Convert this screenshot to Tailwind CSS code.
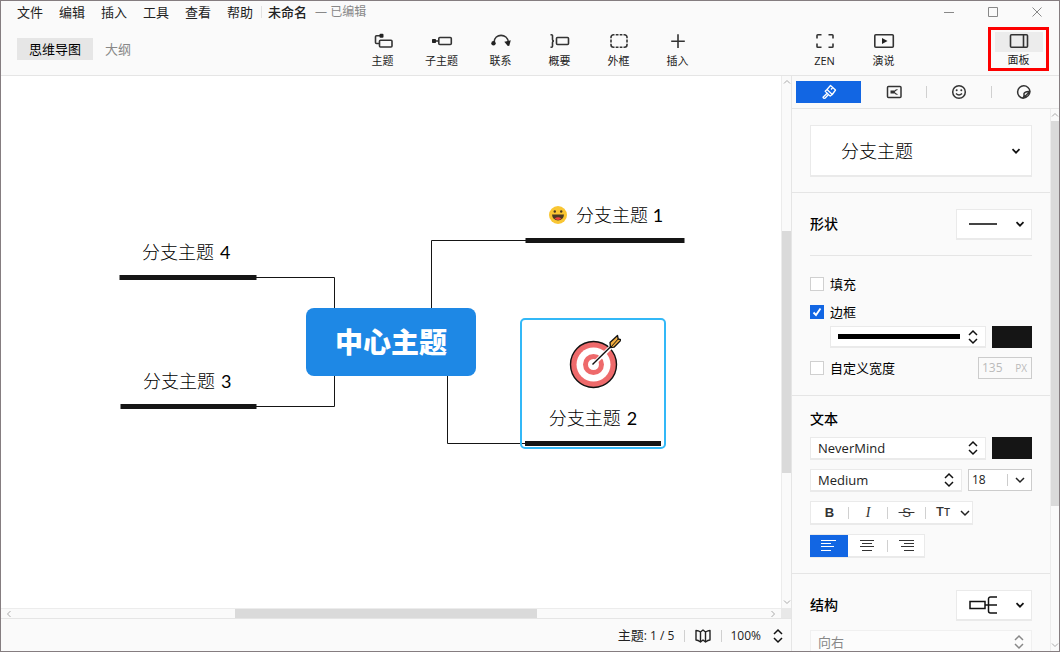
<!DOCTYPE html>
<html lang="zh-CN">
<head>
<meta charset="utf-8">
<meta name="viewport" content="width=device-width, initial-scale=1">
<title>未命名</title>
<script src="https://cdn.jsdelivr.net/npm/@tailwindcss/browser@4"></script>
</head>
<body class="flex h-screen flex-col overflow-hidden border border-[#857d80] bg-[#fafafa] font-['Open_Sans','Noto_Sans_CJK_SC',sans-serif] text-[13px] leading-5 text-[#222]">

<header class="flex h-[75px] shrink-0 flex-col border-b border-[#e5e5e5]">
  <div class="flex h-[22px] items-center justify-between">
    <nav class="flex items-center pl-4" aria-label="主菜单">
      <div class="flex gap-4">
        <button type="button">文件</button>
        <button type="button">编辑</button>
        <button type="button">插入</button>
        <button type="button">工具</button>
        <button type="button">查看</button>
        <button type="button">帮助</button>
      </div>
      <span class="ml-2 h-3 w-px bg-[#e2e2e2]"></span>
      <span class="ml-1.5 font-medium">未命名</span>
      <span class="ml-2 text-xs text-[#888]">— 已编辑</span>
    </nav>
    <div class="flex">
      <button type="button" aria-label="最小化" class="flex w-11 justify-center"><svg class="size-3" viewBox="0 0 12 12" stroke="#888"><path d="M1 6.500h10"/></svg></button>
      <button type="button" aria-label="最大化" class="flex w-11 justify-center"><svg class="size-3" viewBox="0 0 12 12" fill="none" stroke="#888"><path d="M1.500 1.500h9v9h-9z"/></svg></button>
      <button type="button" aria-label="关闭" class="flex w-11 justify-center"><svg class="size-3" viewBox="0 0 12 12" fill="none" stroke="#888"><path d="M1.500 1.500l9 9M10.500 1.500l-9 9"/></svg></button>
    </div>
  </div>

  <div class="flex flex-1 items-start">
    <div class="flex w-[352px] shrink-0 gap-3 pt-[15px] pl-4">
      <button type="button" class="h-[22px] w-[76px] bg-[#e6e6e6] text-black">思维导图</button>
      <button type="button" class="text-[#888]">大纲</button>
    </div>
    <div class="flex text-[11px] leading-4">
      <button type="button" class="flex w-[59px] flex-col items-center gap-0.5 pt-2">
        <svg class="h-5 w-6" viewBox="0 0 24 20" fill="none" stroke="#333" stroke-width="1.600"><rect x="8.500" y="9.300" width="12.500" height="6.700" rx="1"/><path d="M10 4.700H5.500a1 1 0 0 0-1 1V11.500a1 1 0 0 0 1 1H8.500"/><rect x="8.500" y="2.800" width="4" height="4" rx="1" fill="#222" stroke="none"/></svg>主题</button>
      <button type="button" class="flex w-[59px] flex-col items-center gap-0.5 pt-2">
        <svg class="h-5 w-6" viewBox="0 0 24 20" fill="none" stroke="#333" stroke-width="1.600"><rect x="8.800" y="6.500" width="12.500" height="7" rx="1"/><path d="M4 10h4.500"/><rect x="2" y="8" width="4" height="4" rx=".7" fill="#222" stroke="none"/></svg>子主题</button>
      <button type="button" class="flex w-[59px] flex-col items-center gap-0.5 pt-2">
        <svg class="h-5 w-6" viewBox="0 0 24 20" fill="none" stroke="#333" stroke-width="1.600"><path d="M5 11.500c.5-9.500 13.500-9.500 14.500 0"/><circle cx="4.500" cy="12.300" r="2.200" fill="#222" stroke="none"/><path d="M15.300 10.800l6.500-1.600-1.500 5.500-1.500.3z" fill="#222" stroke="none"/></svg>联系</button>
      <button type="button" class="flex w-[59px] flex-col items-center gap-0.5 pt-2">
        <svg class="h-5 w-6" viewBox="0 0 24 20" fill="none" stroke="#333" stroke-width="1.600"><rect x="8.500" y="6.500" width="12" height="7" rx="1"/><path d="M2.500 3.700h1a1 1 0 0 1 1 1V8.500q0 1.500 1.500 1.500-1.500 0-1.500 1.500v3.800a1 1 0 0 1-1 1h-1"/></svg>概要</button>
      <button type="button" class="flex w-[59px] flex-col items-center gap-0.5 pt-2">
        <svg class="h-5 w-6" viewBox="0 0 24 20" fill="none" stroke="#333" stroke-width="1.600"><path d="M7.500 3.800h-1a2.500 2.500 0 0 0-2.500 2.500v1M16.500 3.800h1a2.500 2.500 0 0 1 2.500 2.500v1M7.500 16.200h-1a2.500 2.500 0 0 1-2.500-2.500v-1M16.500 16.200h1a2.500 2.500 0 0 0 2.500-2.500v-1M8.700 3.800h2.800M12.700 3.800h2.700M8.700 16.200h2.800M12.700 16.200h2.700M4 8.400v3.200M20 8.400v3.200"/></svg>外框</button>
      <button type="button" class="flex w-[59px] flex-col items-center gap-0.5 pt-2">
        <svg class="h-5 w-6" viewBox="0 0 24 20" fill="none" stroke="#333" stroke-width="1.600"><path d="M12 3.300v13.700M5.200 10.200h13.600"/></svg>插入</button>
    </div>
    <div class="ml-auto flex text-[11px] leading-4">
      <button type="button" class="flex w-[59px] flex-col items-center gap-0.5 pt-2">
        <svg class="h-5 w-6" viewBox="0 0 24 20" fill="none" stroke="#333" stroke-width="1.600"><path d="M8.500 3.800H4.800a.8.800 0 0 0-.8.800V7.500M15.500 3.800h3.700a.8.800 0 0 1 .8.800V7.500M8.500 16.200H4.800a.8.800 0 0 1-.8-.8V12.500M15.500 16.200h3.700a.8.800 0 0 0 .8-.8V12.500"/></svg>ZEN</button>
      <button type="button" class="flex w-[59px] flex-col items-center gap-0.5 pt-2">
        <svg class="h-5 w-6" viewBox="0 0 24 20" fill="none" stroke="#333" stroke-width="1.600"><rect x="2.800" y="3.800" width="18.500" height="12.500" rx="1"/><path d="M10 7l5.500 3-5.500 3z" fill="#222" stroke="none"/></svg>演说</button>
    </div>
    <button type="button" class="mt-1 mr-2.5 ml-[75px] flex h-11 w-[61px] flex-col items-center border-[3px] border-[#fd0000] pt-0.5 text-[11px] leading-4">
      <span class="flex h-5 w-12 justify-center bg-[#ececec]"><svg class="h-5 w-6" viewBox="0 0 24 20" fill="none" stroke="#333" stroke-width="1.600"><rect x="3.500" y="2.800" width="17" height="12.500" rx="1"/><path d="M16.500 3v12"/></svg></span>面板</button>
  </div>
</header>

<div class="flex min-h-0 flex-1">
  <div class="flex min-w-0 flex-1 flex-col">
    <div class="grid min-h-0 flex-1 grid-cols-[1fr_10px] grid-rows-[1fr_10px]">
      <main class="relative overflow-hidden bg-white text-lg font-light text-black">
        <svg class="absolute top-0 left-0 h-[532px] w-[780px]" viewBox="1 76 780 532" fill="none" stroke="#151515" aria-hidden="true">
          <path d="M256 277.500h78.500V320M256 406.500h78.500V370M431.500 320v-79.500H526M447.500 370v73.500H526"/>
          <path stroke-width="5" d="M119.500 277.500h137M120.500 406.500h136M525.500 240.500h159"/>
        </svg>
        <div class="absolute top-[164px] left-[141px] flex gap-1.5 leading-6">分支主题 <span class="font-['Lato'] font-normal">4</span></div>
        <div class="absolute top-[293px] left-[142px] flex gap-1.5 leading-6">分支主题 <span class="font-['Lato'] font-normal">3</span></div>
        <div class="absolute top-[127px] left-[548px] flex items-center gap-[9px] leading-6">
          <svg class="size-[18px]" viewBox="0 0 18 18"><circle cx="9" cy="9" r="9" fill="#f9c633"/><circle cx="5.800" cy="5.500" r="1.200" fill="#4b3a20"/><circle cx="12.200" cy="5.500" r="1.200" fill="#4b3a20"/><path d="M3 8.500h12a6 6 0 0 1-12 0z" fill="#4a3a25"/><path d="M5.500 12.500q3.500-2.500 7 0a5 5 0 0 1-7 0z" fill="#f0443c"/></svg>
          <span>分支主题 <span class="font-['Lato'] font-normal">1</span></span>
        </div>
        <div class="absolute top-[232px] left-[305px] flex h-[68px] w-[170px] items-center justify-center rounded-lg bg-[#1e88e5] pt-0.5 text-[28px] font-black text-white">中心主题</div>
        <div class="absolute top-[242px] left-[519px] flex h-[131px] w-[146px] flex-col items-center rounded-[5px] border-2 border-[#33b8f7] pt-3.5 leading-6">
          <svg class="h-14 w-14" viewBox="0 0 56 56"><circle cx="28.500" cy="30.500" r="23" fill="#ee6a6b" stroke="#111" stroke-width="1.400"/><circle cx="28.500" cy="30.500" r="17" fill="#fff"/><circle cx="28.500" cy="30.500" r="10.500" fill="#ee6a6b"/><circle cx="28.500" cy="30.500" r="5.500" fill="#fff"/><path d="M28 30.500L48 11" stroke="#fff" stroke-width="4"/><path d="M27.500 30.500L52 6.500" stroke="#111" stroke-width="1.400"/><path d="M45.500 13.500l-.5-5L52.500 1.500l.7 3.500 3.300.700-7.500 7.500z" fill="#f5b041" stroke="#111" stroke-width="1.300" stroke-linejoin="round"/><path d="M45.500 13.500l7.700-8.500" stroke="#111"/></svg>
          <div class="mt-4 flex gap-1.5">分支主题 <span class="font-['Lato'] font-normal">2</span></div>
          <span class="mt-auto mb-px h-[5px] w-[136px] bg-[#151515]"></span>
        </div>
      </main>
      <div class="flex flex-col items-center border-l border-[#ececec] bg-[#fafafa]">
        <svg class="my-0.5 size-2" viewBox="0 0 8 8" fill="none" stroke="#aaa"><path d="M1 5.500l3-3 3 3"/></svg>
        <span class="mt-[143px] h-[242px] w-full bg-[#dadada]"></span>
        <svg class="mt-auto mb-0.5 size-2" viewBox="0 0 8 8" fill="none" stroke="#aaa"><path d="M1 2.500l3 3 3-3"/></svg>
      </div>
      <div class="flex items-center border-t border-[#ececec] bg-[#fafafa]">
        <svg class="mx-1 size-2" viewBox="0 0 8 8" fill="none" stroke="#aaa"><path d="M5.500 1l-3 3 3 3"/></svg>
        <span class="ml-[218px] h-full w-[302px] bg-[#dadada]"></span>
        <svg class="mr-1 ml-auto size-2" viewBox="0 0 8 8" fill="none" stroke="#aaa"><path d="M2.500 1l3 3-3 3"/></svg>
      </div>
      <div class="bg-[#e8e8e8]"></div>
    </div>
    <footer class="flex h-[33px] shrink-0 items-center justify-end border-t border-[#e5e5e5] pt-px pr-2 text-xs">
      <span><span class="text-[13px]">主题</span>: 1 / 5</span>
      <span class="ml-2.5 h-3 w-px bg-[#d0d0d0]"></span>
      <button type="button" aria-label="地图" class="ml-2.5"><svg class="size-4" viewBox="0 0 16 16" fill="none" stroke="#222" stroke-width="1.400" stroke-linejoin="round"><path d="M1 2.500v9.500q2 0 4.500 2l2.500-2 2.500 2q2.500-2 4.500-2V2.500q-2 0-4.500 1.500L8 2 5.500 4Q3.500 2.500 1 2.500zM5.500 4v10M10.500 4v10"/></svg></button>
      <span class="ml-2.5 h-3 w-px bg-[#d0d0d0]"></span>
      <button type="button" class="ml-2 flex items-center gap-3">100%
        <svg class="h-4 w-2.5" viewBox="0 0 10 16" fill="none" stroke="#111" stroke-width="1.500"><path d="M1 6l4-4 4 4M1 10l4 4 4-4"/></svg></button>
    </footer>
  </div>

  <aside class="flex w-[268px] shrink-0 flex-col border-l border-[#e5e5e5]">
    <div class="flex h-[33px] shrink-0 items-center border-b border-[#e5e5e5] pl-1">
      <button type="button" aria-label="样式" class="flex h-[22px] w-[65px] items-center justify-center bg-[#1266e3]">
        <svg class="size-4" viewBox="0 0 16 16" fill="none" stroke="#fff" stroke-width="1.300" stroke-linejoin="round"><path d="M9.500 1.500l5 4.500-3.200 4.500L6 5.500zM6 5.500l-1.800 1.800 5 4.800 2-1.700M6.200 9.200L2 13.200q.5 1.500 2 1l3.500-3.700M10 5.500l1.500-1.700"/></svg></button>
      <button type="button" aria-label="骨架" class="flex h-3 w-[66px] items-center justify-center border-r border-[#d0d0d0]">
        <svg class="h-3.5 w-4 shrink-0" viewBox="0 0 16 14" fill="none" stroke="#333" stroke-width="1.500"><rect x="1.500" y="1.500" width="13.500" height="11" rx="1"/><path d="M11.500 4.500q-2 .2-3.500 2.500 1.500 2.300 3.500 2.500" stroke-width="1.200"/><rect x="4.500" y="5.500" width="4" height="3" fill="#333" stroke="none"/></svg></button>
      <button type="button" aria-label="贴纸" class="flex h-3 w-[65px] items-center justify-center border-r border-[#d0d0d0]">
        <svg class="size-4 shrink-0" viewBox="0 0 16 16" fill="none" stroke="#333" stroke-width="1.500"><circle cx="8" cy="8" r="6.300"/><path d="M5 9.500q3 3 6 0"/><circle cx="5.700" cy="6.300" r="1" fill="#333" stroke="none"/><circle cx="10.300" cy="6.300" r="1" fill="#333" stroke="none"/></svg></button>
      <button type="button" aria-label="标记" class="flex w-16 items-center justify-center">
        <svg class="size-4" viewBox="0 0 16 16" fill="none" stroke="#333" stroke-width="1.500" stroke-linejoin="round"><path d="M7 14.200A6.200 6.200 0 1 1 14 7.500zM14 7.500Q13.500 13 7 14.200M14 7.500Q9 7 8 9.500 8.500 12 7 14.200"/></svg></button>
    </div>

    <div class="flex min-h-0 flex-1">
      <div class="min-w-0 flex-1 overflow-hidden">
        <section class="border-b border-[#e5e5e5] px-[18px] pt-4 pb-[15px]">
          <div class="grid items-center border border-b-2 border-[#eaeaea] bg-white">
            <select aria-label="主题类型" class="col-start-1 row-start-1 h-[49px] appearance-none pl-[30px] text-lg font-light text-black"><option>分支主题</option></select>
            <svg class="pointer-events-none col-start-1 row-start-1 mr-2.5 size-2.5 justify-self-end" viewBox="0 0 10 10" fill="none" stroke="#111" stroke-width="1.700"><path d="M1.500 3.200l3.500 3.500 3.500-3.500"/></svg>
          </div>
        </section>

        <section class="border-b border-[#e5e5e5] px-[18px] pt-4 pb-4">
          <div class="flex items-center justify-between">
            <h2 class="pb-0.5 text-sm font-medium text-black">形状</h2>
            <button type="button" aria-label="形状" class="flex h-[31px] w-[76px] items-center justify-between border border-b-2 border-[#eaeaea] bg-white pr-1.5 pl-3">
              <span class="h-0.5 w-7 bg-[#444]"></span>
              <svg class="size-2.5" viewBox="0 0 10 10" fill="none" stroke="#111" stroke-width="1.700"><path d="M1.500 3.200l3.500 3.500 3.500-3.500"/></svg>
            </button>
          </div>
          <hr class="mt-[15px] border-[#e5e5e5]">
          <label class="mt-3.5 flex h-7 items-center gap-1.5 text-black"><input type="checkbox" class="size-3.5 appearance-none border border-[#d0d0d0] bg-white">填充</label>
          <label class="flex h-7 items-center gap-1.5 text-black">
            <span class="grid size-3.5"><input type="checkbox" checked class="col-start-1 row-start-1 size-3.5 appearance-none bg-[#1266e3]"><svg class="pointer-events-none col-start-1 row-start-1 size-3.5" viewBox="0 0 14 14" fill="none" stroke="#fff" stroke-width="1.900"><path d="M3.500 7.500l2.500 2.500 4.500-6.500"/></svg></span>边框</label>
          <div class="flex justify-between pl-5">
            <button type="button" aria-label="边框粗细" class="flex h-[22px] w-[156px] items-center justify-between border border-b-2 border-[#eaeaea] bg-white pr-[7px] pl-[7px]">
              <span class="h-[5px] w-[122px] bg-black"></span>
              <svg class="h-4 w-2.5" viewBox="0 0 10 16" fill="none" stroke="#111" stroke-width="1.500"><path d="M1 6l4-4 4 4M1 10l4 4 4-4"/></svg>
            </button>
            <button type="button" aria-label="边框颜色" class="h-[22px] w-10 bg-[#151515]"></button>
          </div>
          <div class="mt-[9px] flex items-center justify-between">
            <label class="flex items-center gap-1.5 text-black"><input type="checkbox" class="size-3.5 appearance-none border border-[#d0d0d0] bg-white">自定义宽度</label>
            <label class="flex h-[22px] w-[54px] items-center border border-[#ccc] pr-1 pl-[3px] text-[10px] text-[#bbb]"><input type="text" value="135" disabled aria-label="宽度" class="w-full min-w-0 text-xs">PX</label>
          </div>
        </section>

        <section class="border-b border-[#e5e5e5] px-[18px] pt-[13px] pb-[15px]">
          <h2 class="text-sm font-medium text-black">文本</h2>
          <div class="mt-2 flex justify-between">
            <div class="grid w-[176px] items-center border border-b-2 border-[#eaeaea] bg-white">
              <select aria-label="字体" class="col-start-1 row-start-1 h-5 appearance-none pl-[7px]"><option>NeverMind</option></select>
              <svg class="pointer-events-none col-start-1 row-start-1 mr-[7px] h-4 w-2.5 justify-self-end" viewBox="0 0 10 16" fill="none" stroke="#111" stroke-width="1.500"><path d="M1 6l4-4 4 4M1 10l4 4 4-4"/></svg>
            </div>
            <button type="button" aria-label="文字颜色" class="h-[22px] w-10 bg-[#151515]"></button>
          </div>
          <div class="mt-[9px] flex justify-between">
            <div class="grid w-[152px] items-center border border-b-2 border-[#eaeaea] bg-white">
              <select aria-label="字重" class="col-start-1 row-start-1 h-5 appearance-none pl-[7px]"><option>Medium</option></select>
              <svg class="pointer-events-none col-start-1 row-start-1 mr-[7px] h-4 w-2.5 justify-self-end" viewBox="0 0 10 16" fill="none" stroke="#111" stroke-width="1.500"><path d="M1 6l4-4 4 4M1 10l4 4 4-4"/></svg>
            </div>
            <div class="flex h-[22px] w-16 items-center border border-[#ccc] bg-white pl-[3px]">
              <input type="text" value="18" aria-label="字号" class="w-[35px] text-xs">
              <button type="button" aria-label="选择字号" class="flex h-3 flex-1 items-center justify-center border-l border-[#ccc]"><svg class="size-2.5" viewBox="0 0 10 10" fill="none" stroke="#222" stroke-width="1.500"><path d="M1 3l4 4 4-4"/></svg></button>
            </div>
          </div>
          <div class="mt-[9px] flex h-6 w-[163px] items-center border border-b-2 border-[#eaeaea] bg-white text-[#333]">
            <button type="button" aria-label="粗体" class="flex h-3 w-[38px] items-center justify-center border-r border-[#d0d0d0] font-['Liberation_Sans'] font-bold">B</button>
            <button type="button" aria-label="斜体" class="flex h-3 w-[39px] items-center justify-center border-r border-[#d0d0d0] font-['Liberation_Serif'] text-sm italic">I</button>
            <button type="button" aria-label="删除线" class="flex h-3 w-[38px] items-center justify-center border-r border-[#d0d0d0] font-['Liberation_Sans']"><s>&nbsp;S&nbsp;</s></button>
            <button type="button" aria-label="大小写" class="flex flex-1 items-center justify-between pr-0.5 pl-2.5 font-['Roboto'] font-medium"><span>T<span class="text-[10px]">T</span></span><svg class="size-2.5" viewBox="0 0 10 10" fill="none" stroke="#222" stroke-width="1.500"><path d="M1 3l4 4 4-4"/></svg></button>
          </div>
          <div class="mt-[9px] flex h-6 w-[115px] items-center border border-b-2 border-l-0 border-[#eaeaea] bg-white">
            <button type="button" aria-label="左对齐" class="flex h-[22px] w-[38px] items-center justify-center bg-[#1266e3]"><svg class="h-3 w-4" viewBox="0 0 16 12" stroke="#fff"><path d="M0 .5h15M0 3.500h10M0 6.500h13M0 10.500h10"/></svg></button>
            <button type="button" aria-label="居中" class="flex h-3 w-10 items-center justify-center border-r border-[#d0d0d0]"><svg class="h-3 w-4" viewBox="0 0 16 12" stroke="#333"><path d="M0 .5h14M2 3.500h10M0 6.500h14M2 10.500h10"/></svg></button>
            <button type="button" aria-label="右对齐" class="flex flex-1 items-center justify-center"><svg class="h-3 w-4" viewBox="0 0 16 12" stroke="#333"><path d="M1 .5h15M6 3.500h10M3 6.500h13M6 10.500h10"/></svg></button>
          </div>
        </section>

        <section class="px-[18px] pt-4">
          <div class="flex items-center justify-between">
            <h2 class="pb-0.5 text-sm font-medium text-black">结构</h2>
            <button type="button" aria-label="结构" class="flex h-[31px] w-[76px] items-center justify-between border border-b-2 border-[#eaeaea] bg-white pr-1.5 pl-3">
              <svg class="h-5 w-7" viewBox="0 0 28 20" fill="none" stroke="#111" stroke-width="1.500"><rect x="1" y="6.500" width="15" height="7"/><path d="M16 10h12M28 2h-6.500a2 2 0 0 0-2 2v12a2 2 0 0 0 2 2H28"/></svg>
              <svg class="size-2.5" viewBox="0 0 10 10" fill="none" stroke="#111" stroke-width="1.700"><path d="M1.500 3.200l3.500 3.500 3.500-3.500"/></svg>
            </button>
          </div>
          <div class="mt-[9px] grid items-center border border-[#f0f0f0] bg-[#fcfcfc]">
            <select aria-label="方向" disabled class="col-start-1 row-start-1 h-[22px] appearance-none pl-[7px] text-[#888]"><option>向右</option></select>
            <svg class="pointer-events-none col-start-1 row-start-1 mr-[7px] h-4 w-2.5 justify-self-end" viewBox="0 0 10 16" fill="none" stroke="#888" stroke-width="1.500"><path d="M1 6l4-4 4 4M1 10l4 4 4-4"/></svg>
          </div>
        </section>
      </div>
      <div class="flex w-[9px] shrink-0 flex-col items-center border-l border-[#ececec]">
        <svg class="my-0.5 size-2 shrink-0" viewBox="0 0 8 8" fill="none" stroke="#aaa"><path d="M1 5.500l3-3 3 3"/></svg>
        <span class="h-[385px] w-full bg-[#dadada]"></span>
        <svg class="mt-auto mb-0.5 size-2" viewBox="0 0 8 8" fill="none" stroke="#aaa"><path d="M1 2.500l3 3 3-3"/></svg>
      </div>
    </div>
  </aside>
</div>
</body>
</html>
